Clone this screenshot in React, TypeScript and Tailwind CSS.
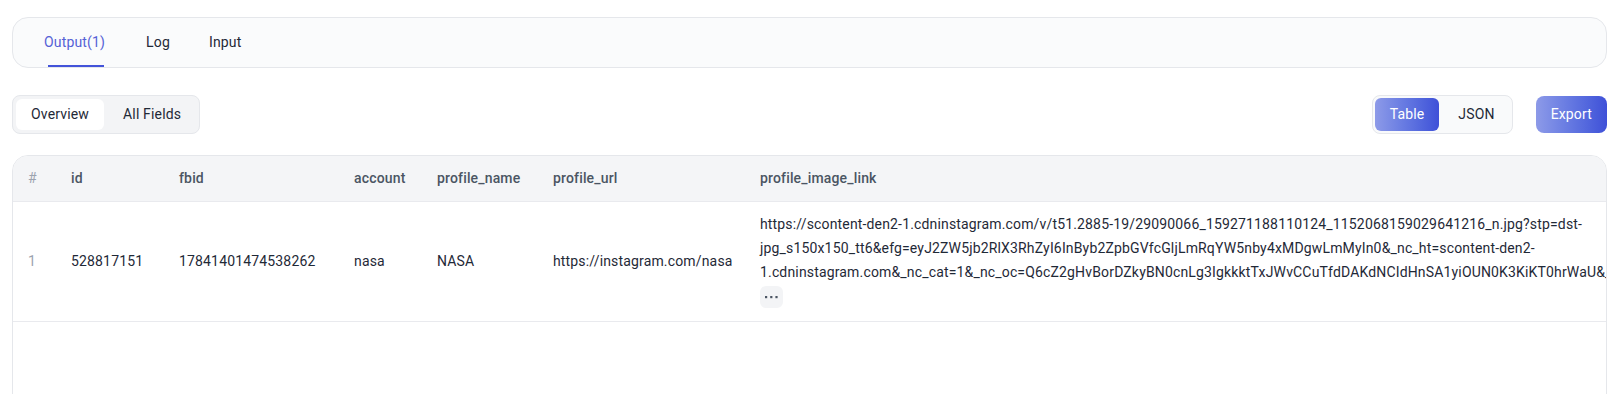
import React from "react";

const FONT = "font-['Roboto','Liberation_Sans',sans-serif] tracking-[0.16px]";

const url =
  "https://scontent-den2-1.cdninstagram.com/v/t51.2885-19/29090066_159271188110124_1152068159029641216_n.jpg?stp=dst-jpg_s150x150_tt6&efg=eyJ2ZW5jb2RlX3RhZyI6InByb2ZpbGVfcGljLmRqYW5nby4xMDgwLmMyIn0&_nc_ht=scontent-den2-1.cdninstagram.com&_nc_cat=1&_nc_oc=Q6cZ2gHvBorDZkyBN0cnLg3IgkkktTxJWvCCuTfdDAKdNCIdHnSA1yiOUN0K3KiKT0hrWaU&_nc_ohc=2Q8nHf1KpLMQ7kNvwH3x0aY&_nc_gid=Kd9aZ1lq&edm=AOQ1c0wBAAAA&ccb=7&oh=00_AfE&oe=68A1B2C3&_nc_sid=8b3546";

const th = "border-b border-[#e9eaee] pl-4 font-medium text-[#4b5563]";
const td = "border-b border-[#e9eaee] pl-4 align-middle";

export default function App() {
  return (
    <div className={`${FONT} bg-white min-h-screen px-3 pt-[17px] text-[14px] text-[#1f2937]`}>
      {/* Tabs card */}
      <div className="h-[51px] rounded-2xl border border-[#e5e7eb] bg-[#fafbfc] pl-[31px] flex items-stretch">
        <div className="relative flex items-center text-[#5561d6]">
          Output(1)
          <span className="absolute bottom-0 left-[4px] right-[1px] h-[2px] bg-[#4353d9]" />
        </div>
        <div className="ml-[41px] flex items-center text-[#1f2937]">Log</div>
        <div className="ml-[39px] flex items-center text-[#1f2937]">Input</div>
      </div>

      {/* Controls row */}
      <div className="mt-[27px] flex items-center justify-between">
        <div className="flex items-center gap-[4px] rounded-lg border border-[#e5e7eb] bg-[#f3f4f6] p-[3px]">
          <button className="h-[31px] rounded-md bg-white px-[15px] text-[#1f2937]">Overview</button>
          <button className="h-[31px] rounded-md px-[15px] text-[#1f2937]">All Fields</button>
        </div>
        <div className="flex items-center gap-[23px]">
          <div className="flex items-center gap-[4px] rounded-lg border border-[#e5e7eb] bg-[#f9fafb] p-[2px]">
            <button className="h-[33px] rounded-md bg-gradient-to-r from-[#8d9ae8] to-[#3f50d8] px-[15px] text-white">Table</button>
            <button className="h-[33px] rounded-md px-[15px] text-[#1f2937]">JSON</button>
          </div>
          <button className="h-[37px] rounded-lg bg-gradient-to-r from-[#8d9ae8] to-[#3f50d8] px-[15px] text-white">Export</button>
        </div>
      </div>

      {/* Table card */}
      <div className="mt-[21px] min-h-[320px] overflow-hidden rounded-2xl border border-[#e5e7eb] bg-white">
        <table className="table-fixed w-[1700px] border-separate border-spacing-0 text-left">
          <colgroup>
            <col className="w-[42px]" />
            <col className="w-[108px]" />
            <col className="w-[175px]" />
            <col className="w-[83px]" />
            <col className="w-[116px]" />
            <col className="w-[207px]" />
            <col className="w-[969px]" />
          </colgroup>
          <thead>
            <tr className="bg-[#f4f5f7]">
              <th className="h-[46px] border-b border-[#e9eaee] pl-[15px] font-normal text-[#9ca3af]">#</th>
              <th className={th}>id</th>
              <th className={th}>fbid</th>
              <th className={th}>account</th>
              <th className={th}>profile_name</th>
              <th className={th}>profile_url</th>
              <th className={th}>profile_image_link</th>
            </tr>
          </thead>
          <tbody>
            <tr>
              <td className="border-b border-[#e9eaee] pl-[15px] align-middle text-[#9ca3af]">1</td>
              <td className={td}>528817151</td>
              <td className={td}>17841401474538262</td>
              <td className={td}>nasa</td>
              <td className={td}>NASA</td>
              <td className={td}>https://instagram.com/nasa</td>
              <td className="border-b border-[#e9eaee] pl-4 pt-[10px] pb-[13px] align-top">
                <div className="w-[850px] leading-[24px]">{url}</div>
                <button className="mt-[2px] flex h-[22px] w-[23px] items-center justify-center rounded-md bg-[#f3f4f6]">
                  <svg width="13" height="3" viewBox="0 0 13 3">
                    <rect x="0" y="0" width="2.2" height="2.2" fill="#4b5563" />
                    <rect x="5.2" y="0" width="2.2" height="2.2" fill="#4b5563" />
                    <rect x="10.4" y="0" width="2.2" height="2.2" fill="#4b5563" />
                  </svg>
                </button>
              </td>
            </tr>
          </tbody>
        </table>
      </div>
    </div>
  );
}
